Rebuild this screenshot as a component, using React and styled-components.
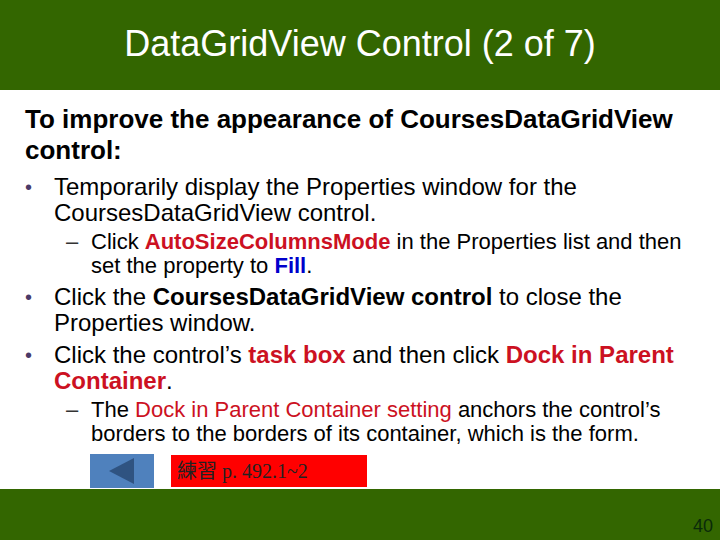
import React from 'react';
import styled, { createGlobalStyle } from 'styled-components';

const Global = createGlobalStyle`
  html, body { margin: 0; padding: 0; background: #fff; }
  body { font-family: "Liberation Sans", Arial, sans-serif; color: #000; }
`;

const Slide = styled.div`
  width: 720px;
  height: 540px;
  display: flex;
  flex-direction: column;
  overflow: hidden;
`;

const Header = styled.header`
  height: 90px;
  flex: none;
  background: #336600;
  color: #fff;
  display: flex;
  align-items: center;
  justify-content: center;
  font-size: 36px;
  font-weight: normal;
  padding-bottom: 3px;
  box-sizing: border-box;
`;

const Body = styled.main`
  flex: 1;
  padding: 14px 20px 0 25px;
  min-height: 0;
`;

const Lead = styled.h2`
  margin: 0 0 8px;
  font-size: 26px;
  line-height: 31px;
  font-weight: bold;
`;

const Bullet = styled.div`
  display: flex;
  font-size: 24px;
  line-height: 26px;
  margin-top: ${p => p.$top || 0}px;
`;

const Mark = styled.span`
  width: 29px;
  flex: none;
  font-size: 20px;
  color: #4a3a68;
`;

const Sub = styled.div`
  display: flex;
  font-size: 22px;
  line-height: 24px;
  margin: ${p => p.$top || 0}px 0 0 41px;
`;

const Dash = styled.span`
  width: 25px;
  flex: none;
  color: #333;
`;

const Hot = styled.b`
  color: #cc1122;
`;

const Red = styled.span`
  color: #cc1122;
`;

const Blue = styled.b`
  color: #0000cc;
`;

const ActionRow = styled.div`
  display: flex;
  align-items: center;
  gap: 17px;
  margin: 8px 0 0 65px;
`;

const BackButton = styled.div`
  width: 64px;
  height: 34px;
  background: #4f81bd;
  display: flex;
  align-items: center;
  justify-content: center;
`;

const Practice = styled.div`
  width: 196px;
  height: 32px;
  background: #ff0000;
  color: #222;
  font-family: "Liberation Serif", "Noto Sans CJK TC", serif;
  font-size: 20px;
  line-height: 32px;
  padding-left: 6px;
  box-sizing: border-box;
`;

const Footer = styled.footer`
  height: 51px;
  flex: none;
  background: #336600;
  display: flex;
  align-items: flex-end;
  justify-content: flex-end;
  padding: 0 7px 3px 0;
  box-sizing: border-box;
  font-size: 18px;
  font-weight: 300;
  color: #0a2a0a;
`;

export default function App() {
  return (
    <Slide>
      <Global />
      <Header>DataGridView Control (2 of 7)</Header>
      <Body>
        <Lead>To improve the appearance of CoursesDataGridView control:</Lead>
        <Bullet>
          <Mark>•</Mark>
          <div>Temporarily display the Properties window for the CoursesDataGridView control.</div>
        </Bullet>
        <Sub $top={4}>
          <Dash>–</Dash>
          <div>Click <Hot>AutoSizeColumnsMode</Hot> in the Properties list and then set the property to <Blue>Fill</Blue>.</div>
        </Sub>
        <Bullet $top={6}>
          <Mark>•</Mark>
          <div>Click the <b>CoursesDataGridView control</b> to close the Properties window.</div>
        </Bullet>
        <Bullet $top={6}>
          <Mark>•</Mark>
          <div>Click the control’s <Hot>task box</Hot> and then click <Hot>Dock in Parent Container</Hot>.</div>
        </Bullet>
        <Sub $top={4}>
          <Dash>–</Dash>
          <div>The <Red>Dock in Parent Container setting</Red> anchors the control’s borders to the borders of its container, which is the form.</div>
        </Sub>
        <ActionRow>
          <BackButton>
            <svg width="28" height="28" viewBox="0 0 28 28">
              <path d="M1 14 L26 1 V27 Z" fill="#2f5381" />
            </svg>
          </BackButton>
          <Practice>練習 p. 492.1~2</Practice>
        </ActionRow>
      </Body>
      <Footer>40</Footer>
    </Slide>
  );
}
